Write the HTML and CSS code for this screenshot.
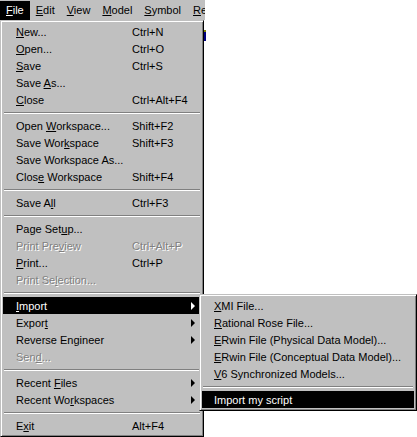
FILE: index.html
```html
<!DOCTYPE html>
<html lang="en">
<head>
  <meta charset="UTF-8" />
  <title>File menu</title>
  <link rel="stylesheet" href="styles.css">
</head>
<body>
  <div class="menubar">
    <span class="bar-item active"><u>F</u>ile</span>
    <span class="bar-item"><u>E</u>dit</span>
    <span class="bar-item"><u>V</u>iew</span>
    <span class="bar-item"><u>M</u>odel</span>
    <span class="bar-item"><u>S</u>ymbol</span>
    <span class="bar-item"><u>R</u>eport</span>
  </div>

  <div class="behind"></div>

  <div class="menu main">
    <div class="row"><span class="label"><u>N</u>ew...</span><span class="key">Ctrl+N</span></div>
    <div class="row"><span class="label"><u>O</u>pen...</span><span class="key">Ctrl+O</span></div>
    <div class="row"><span class="label"><u>S</u>ave</span><span class="key">Ctrl+S</span></div>
    <div class="row"><span class="label">Save <u>A</u>s...</span></div>
    <div class="row"><span class="label"><u>C</u>lose</span><span class="key">Ctrl+Alt+F4</span></div>
    <div class="sep"></div>
    <div class="row"><span class="label">Open <u>W</u>orkspace...</span><span class="key">Shift+F2</span></div>
    <div class="row"><span class="label">Save Wor<u>k</u>space</span><span class="key">Shift+F3</span></div>
    <div class="row"><span class="label">Save Workspace As...</span></div>
    <div class="row"><span class="label">Clos<u>e</u> Workspace</span><span class="key">Shift+F4</span></div>
    <div class="sep"></div>
    <div class="row"><span class="label">Save A<u>l</u>l</span><span class="key">Ctrl+F3</span></div>
    <div class="sep"></div>
    <div class="row"><span class="label">Page Set<u>u</u>p...</span></div>
    <div class="row disabled"><span class="label">Print Pre<u>v</u>iew</span><span class="key">Ctrl+Alt+P</span></div>
    <div class="row"><span class="label"><u>P</u>rint...</span><span class="key">Ctrl+P</span></div>
    <div class="row disabled"><span class="label">Print Se<u>l</u>ection...</span></div>
    <div class="sep"></div>
    <div class="row selected has-sub">
      <span class="label"><u>I</u>mport</span><span class="arrow"></span>
      <div class="menu sub">
        <div class="row"><span class="label"><u>X</u>MI File...</span></div>
        <div class="row"><span class="label"><u>R</u>ational Rose File...</span></div>
        <div class="row"><span class="label"><u>E</u>Rwin File (Physical Data Model)...</span></div>
        <div class="row"><span class="label"><u>E</u>Rwin File (Conceptual Data Model)...</span></div>
        <div class="row"><span class="label"><u>V</u>6 Synchronized Models...</span></div>
        <div class="sep"></div>
        <div class="row selected"><span class="label">Import my script</span></div>
      </div>
    </div>
    <div class="row"><span class="label">Expor<u>t</u></span><span class="arrow"></span></div>
    <div class="row"><span class="label">Reverse Engineer</span><span class="arrow"></span></div>
    <div class="row disabled"><span class="label">Sen<u>d</u>...</span></div>
    <div class="sep"></div>
    <div class="row"><span class="label">Recent <u>F</u>iles</span><span class="arrow"></span></div>
    <div class="row"><span class="label">Recent Wo<u>r</u>kspaces</span><span class="arrow"></span></div>
    <div class="sep"></div>
    <div class="row"><span class="label">E<u>x</u>it</span><span class="key">Alt+F4</span></div>
  </div>
</body>
</html>
```

FILE: styles.css
```css
body {
  margin: 0;
  background: #fff;
  font-family: "Liberation Sans", Arial, sans-serif;
  font-size: 11px;
  color: #000;
  position: relative;
}
u {
  text-decoration: underline;
  text-underline-offset: 1px;
}

/* menu bar, cropped like the screenshot */
.menubar {
  width: 205px;
  height: 20px;
  background: #c0c0c0;
  display: flex;
  align-items: center;
  overflow: hidden;
  white-space: nowrap;
}
.bar-item {
  padding: 2px 6px 3px;
  line-height: 14px;
}
.bar-item.active {
  background: #000;
  color: #fff;
}

/* bit of the window behind the menu */
.behind {
  position: absolute;
  left: 204px;
  top: 30px;
  width: 2px;
  height: 9px;
  background: #000080;
  border-top: 2px solid #808000;
}

/* drop-down panels */
.menu {
  background: #c0c0c0;
  border: 1px solid;
  border-color: #c0c0c0 #000 #000 #c0c0c0;
  box-shadow: inset 1px 1px #fff, inset -1px -1px #808080;
  padding: 2px;
}
.main {
  width: 198px;
}
.row {
  position: relative;
  height: 17px;
  display: flex;
  align-items: center;
  padding-left: 13px;
  white-space: nowrap;
}
.label {
  width: 116px;
}
.key {
  flex: 1;
}
.arrow {
  position: absolute;
  right: 6px;
  top: 5px;
  width: 0;
  height: 0;
  border-top: 4px solid transparent;
  border-bottom: 4px solid transparent;
  border-left: 4px solid #000;
}
.row.selected {
  background: #000;
  color: #fff;
}
.row.selected .arrow {
  border-left-color: #fff;
}
.row.disabled {
  color: #808080;
  text-shadow: 1px 1px 0 #fff;
}
.sep {
  height: 2px;
  margin: 4px 1px 3px;
  border-top: 1px solid #808080;
  border-bottom: 1px solid #fff;
  box-sizing: border-box;
}

.sub {
  position: absolute;
  left: 196px;
  top: -3px;
  width: 212px;
  color: #000;
}
.sub .row {
  padding-left: 12px;
}
.sub .label {
  width: auto;
}
```
